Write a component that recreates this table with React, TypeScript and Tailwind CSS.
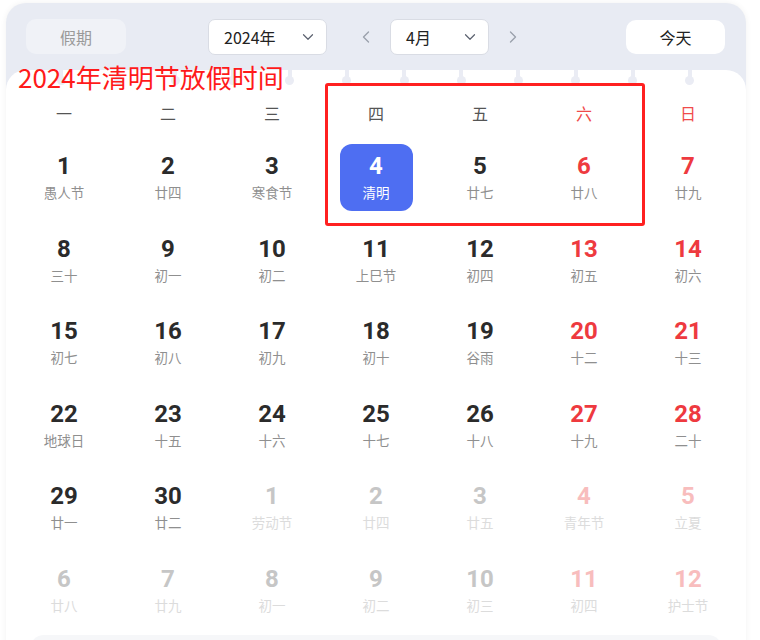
import { ChevronDown, ChevronLeft, ChevronRight } from 'lucide-react'

type Day = {
  n: number;
  lunar: string;
  red?: boolean;
  faded?: boolean;
  selected?: boolean;
};

const weekdays = ['一', '二', '三', '四', '五', '六', '日'];

const rows: Day[][] = [
  [
    { n: 1, lunar: '愚人节' },
    { n: 2, lunar: '廿四' },
    { n: 3, lunar: '寒食节' },
    { n: 4, lunar: '清明', selected: true },
    { n: 5, lunar: '廿七' },
    { n: 6, lunar: '廿八', red: true },
    { n: 7, lunar: '廿九', red: true },
  ],
  [
    { n: 8, lunar: '三十' },
    { n: 9, lunar: '初一' },
    { n: 10, lunar: '初二' },
    { n: 11, lunar: '上巳节' },
    { n: 12, lunar: '初四' },
    { n: 13, lunar: '初五', red: true },
    { n: 14, lunar: '初六', red: true },
  ],
  [
    { n: 15, lunar: '初七' },
    { n: 16, lunar: '初八' },
    { n: 17, lunar: '初九' },
    { n: 18, lunar: '初十' },
    { n: 19, lunar: '谷雨' },
    { n: 20, lunar: '十二', red: true },
    { n: 21, lunar: '十三', red: true },
  ],
  [
    { n: 22, lunar: '地球日' },
    { n: 23, lunar: '十五' },
    { n: 24, lunar: '十六' },
    { n: 25, lunar: '十七' },
    { n: 26, lunar: '十八' },
    { n: 27, lunar: '十九', red: true },
    { n: 28, lunar: '二十', red: true },
  ],
  [
    { n: 29, lunar: '廿一' },
    { n: 30, lunar: '廿二' },
    { n: 1, lunar: '劳动节', faded: true },
    { n: 2, lunar: '廿四', faded: true },
    { n: 3, lunar: '廿五', faded: true },
    { n: 4, lunar: '青年节', faded: true, red: true },
    { n: 5, lunar: '立夏', faded: true, red: true },
  ],
  [
    { n: 6, lunar: '廿八', faded: true },
    { n: 7, lunar: '廿九', faded: true },
    { n: 8, lunar: '初一', faded: true },
    { n: 9, lunar: '初二', faded: true },
    { n: 10, lunar: '初三', faded: true },
    { n: 11, lunar: '初四', faded: true, red: true },
    { n: 12, lunar: '护士节', faded: true, red: true },
  ],
];

const cjk = "font-['Noto_Sans_CJK_SC','Noto_Sans',sans-serif]";

function DayCell({ d }: { d: Day }) {
  let numColor = 'text-[#2b2b2b]';
  let lunarColor = 'text-[#8f8f8f]';
  if (d.red) numColor = 'text-[#ee3a3f]';
  if (d.faded) {
    numColor = d.red ? 'text-[#f8bdbd]' : 'text-[#c6c6c6]';
    lunarColor = 'text-[#dcdcdc]';
  }
  if (d.selected) {
    numColor = 'text-white';
    lunarColor = 'text-white';
  }

  return (
    <div className="flex h-[82.5px] items-center justify-center">
      <div
        className={
          'flex h-[67px] w-[73px] flex-col items-center justify-center rounded-[12px] ' +
          (d.selected ? 'bg-[#4e6ef2]' : '')
        }
      >
        <span className={"font-['Roboto',sans-serif] text-[24px] font-bold leading-[28px] " + numColor}>
          {d.n}
        </span>
        <span className={cjk + ' mt-[2px] text-[13.5px] leading-[20px] ' + lunarColor}>{d.lunar}</span>
      </div>
    </div>
  );
}

function Select({ label, width }: { label: string; width: string }) {
  return (
    <div
      className={
        'flex h-[36px] items-center justify-between rounded-[7px] border border-[#d9dce4] bg-white pl-[15px] pr-[9px] ' +
        width
      }
    >
      <span className={cjk + ' text-[16px] text-[#222]'}>{label}</span>
      <ChevronDown size={18} strokeWidth={1.6} className="text-[#5c6270]" />
    </div>
  );
}

export default function App() {
  return (
    <div className="min-h-screen bg-white pt-[3px] pl-[6px]">
      <div className="relative w-[740px] overflow-hidden rounded-t-[20px] bg-[#e8ebf3] shadow-[0_0_6px_rgba(0,0,0,0.06)]">
        {/* Header */}
        <header className="flex h-[67px] items-center pl-[20px] pr-[21px]">
          <button className={cjk + ' h-[35px] w-[100px] rounded-[10px] bg-[#f0f2f7] text-[16px] text-[#9a9a9a]'}>
            假期
          </button>
          <div className="ml-[82px]">
            <Select label="2024年" width="w-[119px]" />
          </div>
          <ChevronLeft size={20} strokeWidth={1.6} className="ml-[29px] text-[#9aa0ab]" />
          <div className="ml-[14px]">
            <Select label="4月" width="w-[99px]" />
          </div>
          <ChevronRight size={20} strokeWidth={1.6} className="ml-[14px] text-[#9aa0ab]" />
          <button className={cjk + ' ml-auto h-[34px] w-[99px] rounded-[10px] bg-white text-[16px] text-[#222]'}>
            今天
          </button>
        </header>

        {/* Body */}
        <div className="relative rounded-t-[20px] bg-white px-[6px] pt-[20px]">
          <div className="grid h-[46px] grid-cols-7 items-center">
            {weekdays.map((w, i) => (
              <div
                key={w}
                className={cjk + ' text-center text-[16px] ' + (i >= 5 ? 'text-[#f04b4b]' : 'text-[#555]')}
              >
                {w}
              </div>
            ))}
          </div>
          {rows.map((row, r) => (
            <div key={r} className="grid grid-cols-7">
              {row.map((d, c) => (
                <DayCell key={c} d={d} />
              ))}
            </div>
          ))}
          <div className="mx-[18px] mt-[4px] h-[20px] rounded-t-[14px] bg-[#f6f7f9]" />
        </div>

        {/* binding rings */}
        <div className="absolute left-[50.5px] top-[67px] flex w-[638px] justify-between">
          {Array.from({ length: 12 }).map((_, i) => (
            <div key={i} className="flex w-[9px] flex-col items-center">
              <div className="h-[8px] w-[4px] bg-[#eaecf4]" />
              <div className="-mt-[2px] h-[9px] w-[9px] rounded-full bg-[#eaecf4]" />
            </div>
          ))}
        </div>
      </div>

      {/* annotation overlay */}
      <div className={cjk + ' absolute left-[18px] top-[60px] text-[26px] leading-[34px] text-[#ff1a1a]'}>
        2024年清明节放假时间
      </div>
      <div className="absolute left-[325px] top-[83px] h-[143px] w-[320px] rounded-[3px] border-[3px] border-[#ff2020]" />
    </div>
  );
}
